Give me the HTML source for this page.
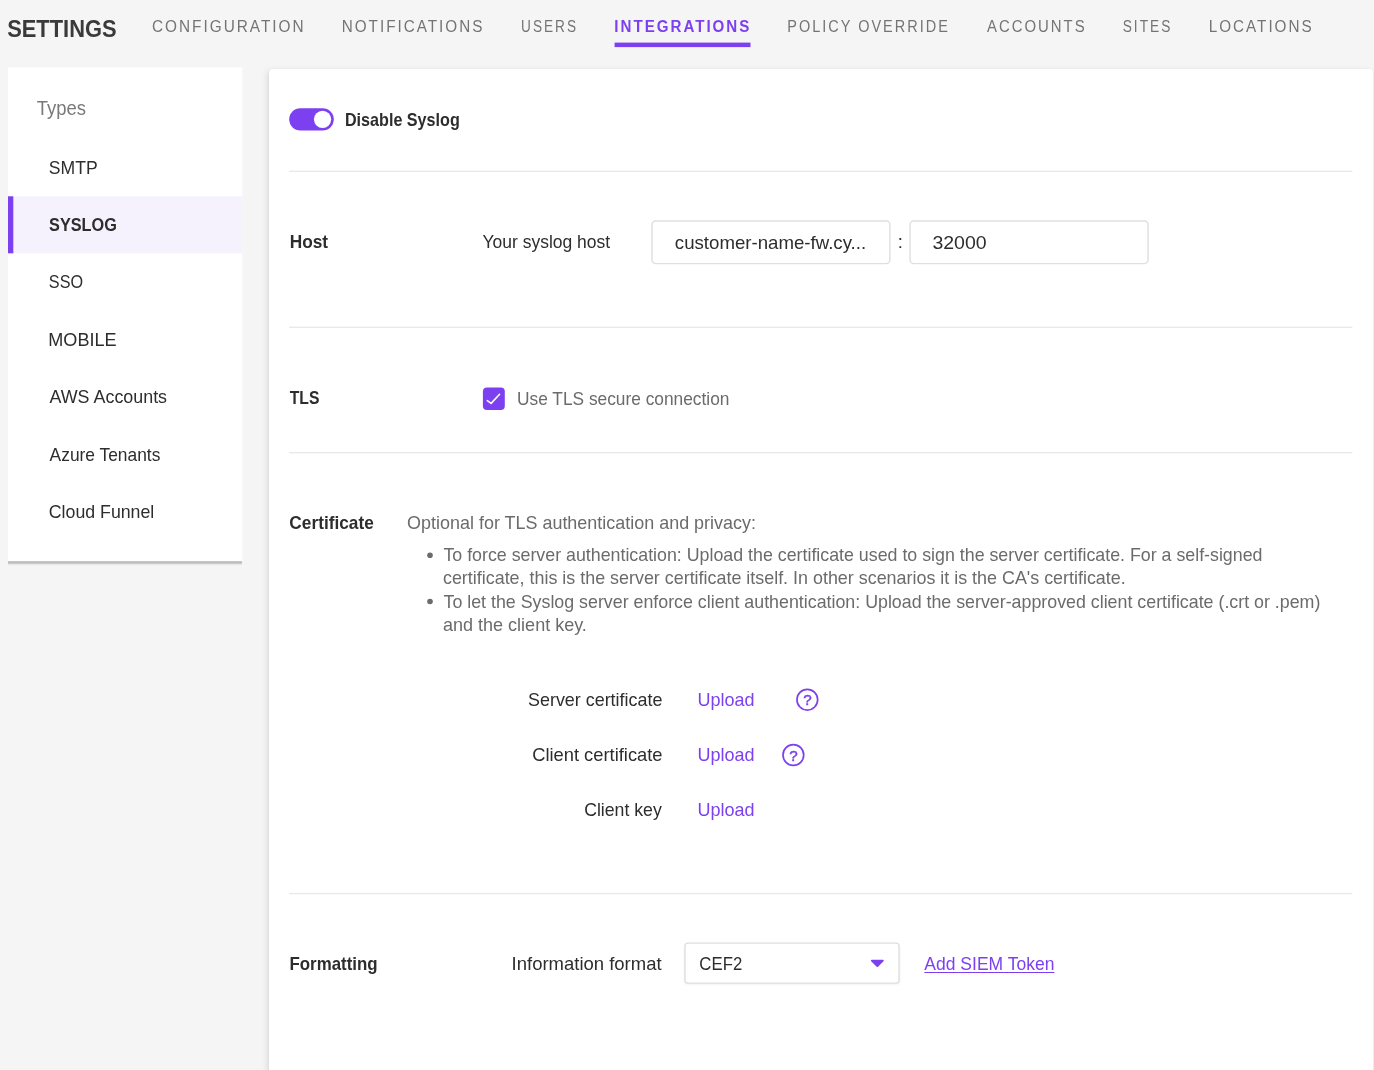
<!DOCTYPE html>
<html lang="en">
<head>
<meta charset="utf-8">
<title>Settings - Integrations - Syslog</title>
<style>
*{box-sizing:border-box;margin:0;padding:0}
html,body{width:1374px;height:1070px;overflow:hidden;background:#f5f5f5}
body{position:relative;font-family:"Liberation Sans",sans-serif;color:#2d2d2d;font-size:18px;will-change:transform}
.w{display:contents}
ul,li{list-style:none}
h1,h2,h3,p,label,a,span,li{font-weight:normal;font-size:inherit}
.t{display:block;position:absolute;white-space:nowrap;line-height:1;transform-origin:0 0}
.b{font-weight:bold}
.g{color:#6b6b6b}
.g2{color:#7a7a7a}
.p{color:#7c40f0}
.u{text-decoration:underline;text-decoration-thickness:1.4px;text-underline-offset:1.6px}
.tab{color:#747474}
.tab.p{color:#7c40f0}
#sideshadow{position:absolute;left:8px;top:561px;width:234px;height:5px;background:linear-gradient(to bottom,rgba(0,0,0,.13) 0,rgba(0,0,0,.235) 18%,rgba(0,0,0,.225) 42%,rgba(0,0,0,.07) 66%,rgba(0,0,0,.02) 85%,rgba(0,0,0,0) 100%);border-radius:0 0 2px 2px}
#main{position:absolute;left:268.8px;top:69px;width:1104.1px;height:1020px;background:#fff;border-radius:3.5px;box-shadow:-2px 2px 6px rgba(0,0,0,.10),0 0 2px rgba(0,0,0,.06)}
#shapes{position:absolute;left:0;top:0}
#shapes text{font-family:"Liberation Sans",sans-serif}
</style>
</head>
<body>

<div id="sideshadow"></div>
<div id="main"></div>

<svg id="shapes" width="1374" height="1070" viewBox="0 0 1374 1070">
<!-- sidebar card -->
<rect x="8" y="67.4" width="234.2" height="493.5" fill="#fff"/>
<rect x="8" y="196.3" width="234.2" height="57" fill="#f5f2fe"/>
<rect x="8" y="196.3" width="5.3" height="57" fill="#7c40f0"/>
<!-- active tab underline -->
<rect x="614.6" y="42.6" width="135.9" height="4.5" fill="#7c40f0"/>
<!-- section dividers -->
<g fill="#e8e8e8">
<rect x="289.1" y="170.7" width="1063.3" height="1.3"/>
<rect x="289.1" y="326.6" width="1063.3" height="1.3"/>
<rect x="289.1" y="452" width="1063.3" height="1.3"/>
<rect x="289.1" y="892.9" width="1063.3" height="1.3"/>
</g>
<!-- toggle -->
<rect x="289.2" y="108.15" width="44.6" height="22.25" rx="11.125" fill="#7c40f0"/>
<circle cx="322.55" cy="119.3" r="8.6" fill="#fff"/>
<!-- inputs -->
<g fill="#fff" stroke="#dfdfdf" stroke-width="1.4">
<rect x="651.95" y="221" width="237.95" height="42.63" rx="3.8"/>
<rect x="910.05" y="221" width="238.04" height="42.63" rx="3.8"/>
<rect x="684.97" y="943.17" width="214.07" height="39.97" rx="3" style="filter:drop-shadow(0 1px 1px rgba(0,0,0,.05))"/>
</g>
<!-- checkbox -->
<rect x="482.9" y="387.6" width="21.9" height="22.4" rx="4" fill="#7c40f0"/>
<path d="M487.3 400.6 L491.1 403.4 L499.6 394.3" fill="none" stroke="#fff" stroke-width="1.6" stroke-linecap="round" stroke-linejoin="round"/>
<!-- bullets -->
<circle cx="430" cy="555.2" r="2.8" fill="#6b6b6b"/>
<circle cx="430" cy="601.5" r="2.8" fill="#6b6b6b"/>
<!-- help icons -->
<g fill="none" stroke="#7c40f0" stroke-width="1.7">
<circle cx="807.3" cy="699.7" r="10.35"/>
<circle cx="793.35" cy="755" r="10.35"/>
</g>
<g fill="#7c40f0" stroke="#7c40f0" stroke-width="0.45" font-size="15.2" text-anchor="middle">
<text x="807.4" y="705.45">?</text>
<text x="793.45" y="760.75">?</text>
</g>
<!-- select arrow -->
<path d="M871.85 960.6 H882.85 L877.35 966.1 Z" fill="#7c40f0" stroke="#7c40f0" stroke-width="1.9" stroke-linejoin="round"/>
</svg>

<header class="w">
<h1 class="t b" style="left:7px;top:18px;font-size:23px;transform:translateX(0.17px) scaleX(0.9515);color:#3a3a3a">SETTINGS</h1>
<nav class="w">
<a class="t tab" style="left:151px;top:19px;font-size:16px;letter-spacing:2.082px;transform:translateX(0.88px) scaleX(0.9604)">CONFIGURATION</a>
<a class="t tab" style="left:341px;top:19px;font-size:16px;letter-spacing:2.096px;transform:translateX(0.70px) scaleX(0.9540)">NOTIFICATIONS</a>
<a class="t tab" style="left:521px;top:19px;font-size:16px;letter-spacing:2.352px;transform:translateX(0.09px) scaleX(0.8504)">USERS</a>
<a class="t tab b p" style="left:614px;top:19px;font-size:16px;letter-spacing:2.117px;transform:translateX(0.29px) scaleX(0.9445)">INTEGRATIONS</a>
<a class="t tab" style="left:787px;top:19px;font-size:16px;letter-spacing:2.211px;transform:translateX(0.34px) scaleX(0.9047)">POLICY OVERRIDE</a>
<a class="t tab" style="left:987px;top:19px;font-size:16px;letter-spacing:2.147px;transform:translateX(0.04px) scaleX(0.9314)">ACCOUNTS</a>
<a class="t tab" style="left:1122px;top:19px;font-size:16px;letter-spacing:2.336px;transform:translateX(0.73px) scaleX(0.8563)">SITES</a>
<a class="t tab" style="left:1208px;top:19px;font-size:16px;letter-spacing:2.098px;transform:translateX(0.67px) scaleX(0.9531)">LOCATIONS</a>
</nav>
</header>
<aside class="w">
<h2 class="t g2" style="left:36px;top:98px;font-size:20px;transform:translateX(0.75px) scaleX(0.9224)">Types</h2>
<ul class="w">
<li class="t" style="left:48px;top:159px;font-size:18.5px;transform:translateX(0.78px) scaleX(0.9513)">SMTP</li>
<li class="t b" style="left:49px;top:216px;font-size:18.5px;transform:translateX(0.06px) scaleX(0.8791)">SYSLOG</li>
<li class="t" style="left:48px;top:273px;font-size:18.5px;transform:translateX(0.87px) scaleX(0.8759)">SSO</li>
<li class="t" style="left:48px;top:331px;font-size:18.5px;transform:translateX(0.33px) scaleX(0.9762)">MOBILE</li>
<li class="t" style="left:49px;top:388px;font-size:18.5px;transform:translateX(0.46px) scaleX(0.9666)">AWS Accounts</li>
<li class="t" style="left:49px;top:446px;font-size:18.5px;transform:translateX(0.61px) scaleX(0.9388)">Azure Tenants</li>
<li class="t" style="left:48px;top:503px;font-size:18.5px;transform:translateX(0.79px) scaleX(0.9586)">Cloud Funnel</li>
</ul>
</aside>
<main class="w">
<section class="w">
<label class="t b" style="left:344px;top:111px;font-size:18.5px;transform:translateX(0.97px) scaleX(0.8723)">Disable Syslog</label>
</section>
<section class="w">
<h3 class="t b" style="left:289px;top:233px;font-size:18.5px;transform:translateX(0.72px) scaleX(0.9343)">Host</h3>
<label class="t" style="left:482px;top:233px;font-size:18.5px;transform:translateX(0.49px) scaleX(0.9454)">Your syslog host</label>
<div class="w">
<span class="t" style="left:674px;top:234px;font-size:18.5px;transform:translateX(0.85px) scaleX(1.0076)">customer-name-fw.cy...</span>
<span class="t" style="left:897.66px;top:233px;font-size:18.5px">:</span>
<span class="t" style="left:932px;top:234px;font-size:18.5px;transform:translateX(0.40px) scaleX(1.0542)">32000</span>
</div>
</section>
<section class="w">
<h3 class="t b" style="left:289px;top:389px;font-size:18.5px;transform:translateX(0.70px) scaleX(0.8486)">TLS</h3>
<label class="t g" style="left:516px;top:390px;font-size:18.5px;transform:translateX(1.00px) scaleX(0.9362)">Use TLS secure connection</label>
</section>
<section class="w">
<h3 class="t b" style="left:289px;top:514px;font-size:18.5px;transform:translateX(0.35px) scaleX(0.9330)">Certificate</h3>
<p class="t g" style="left:407px;top:514px;font-size:18.5px;transform:translateX(0.07px) scaleX(0.9702)">Optional for TLS authentication and privacy:</p>
<ul class="w">
<li class="w">
<span class="t g" style="left:443px;top:546px;font-size:18.5px;transform:translateX(0.39px) scaleX(0.9620)">To force server authentication: Upload the certificate used to sign the server certificate. For a self-signed</span>
<span class="t g" style="left:442px;top:569px;font-size:18.5px;transform:translateX(0.97px) scaleX(0.9674)">certificate, this is the server certificate itself. In other scenarios it is the CA's certificate.</span>
</li>
<li class="w">
<span class="t g" style="left:443px;top:593px;font-size:18.5px;transform:translateX(0.49px) scaleX(0.9625)">To let the Syslog server enforce client authentication: Upload the server-approved client certificate (.crt or .pem)</span>
<span class="t g" style="left:442px;top:616px;font-size:18.5px;transform:translateX(0.99px) scaleX(0.9738)">and the client key.</span>
</li>
</ul>
<div class="w">
<label class="t" style="left:528px;top:691px;font-size:18.5px;transform:translateX(0.01px) scaleX(0.9680)">Server certificate</label>
<a class="t p" style="left:697px;top:691px;font-size:18.5px;transform:translateX(0.48px) scaleX(0.9734)">Upload</a>
<label class="t" style="left:532px;top:746px;font-size:18.5px;transform:translateX(0.16px) scaleX(0.9906)">Client certificate</label>
<a class="t p" style="left:697px;top:746px;font-size:18.5px;transform:translateX(0.48px) scaleX(0.9734)">Upload</a>
<label class="t" style="left:584px;top:801px;font-size:18.5px;transform:translateX(0.16px) scaleX(0.9554)">Client key</label>
<a class="t p" style="left:697px;top:801px;font-size:18.5px;transform:translateX(0.48px) scaleX(0.9734)">Upload</a>
</div>
</section>
<section class="w">
<h3 class="t b" style="left:289px;top:955px;font-size:18.5px;transform:translateX(0.46px) scaleX(0.9118)">Formatting</h3>
<label class="t" style="left:511px;top:955px;font-size:18.5px;transform:translateX(0.62px) scaleX(0.9989)">Information format</label>
<div class="w">
<span class="t" style="left:699px;top:955px;font-size:18.5px;transform:translateX(0.37px) scaleX(0.9056)">CEF2</span>
</div>
<a class="t p u" style="left:924px;top:955px;font-size:18.5px;transform:translateX(0.36px) scaleX(0.9458)">Add SIEM Token</a>
</section>
</main>

</body>
</html>
